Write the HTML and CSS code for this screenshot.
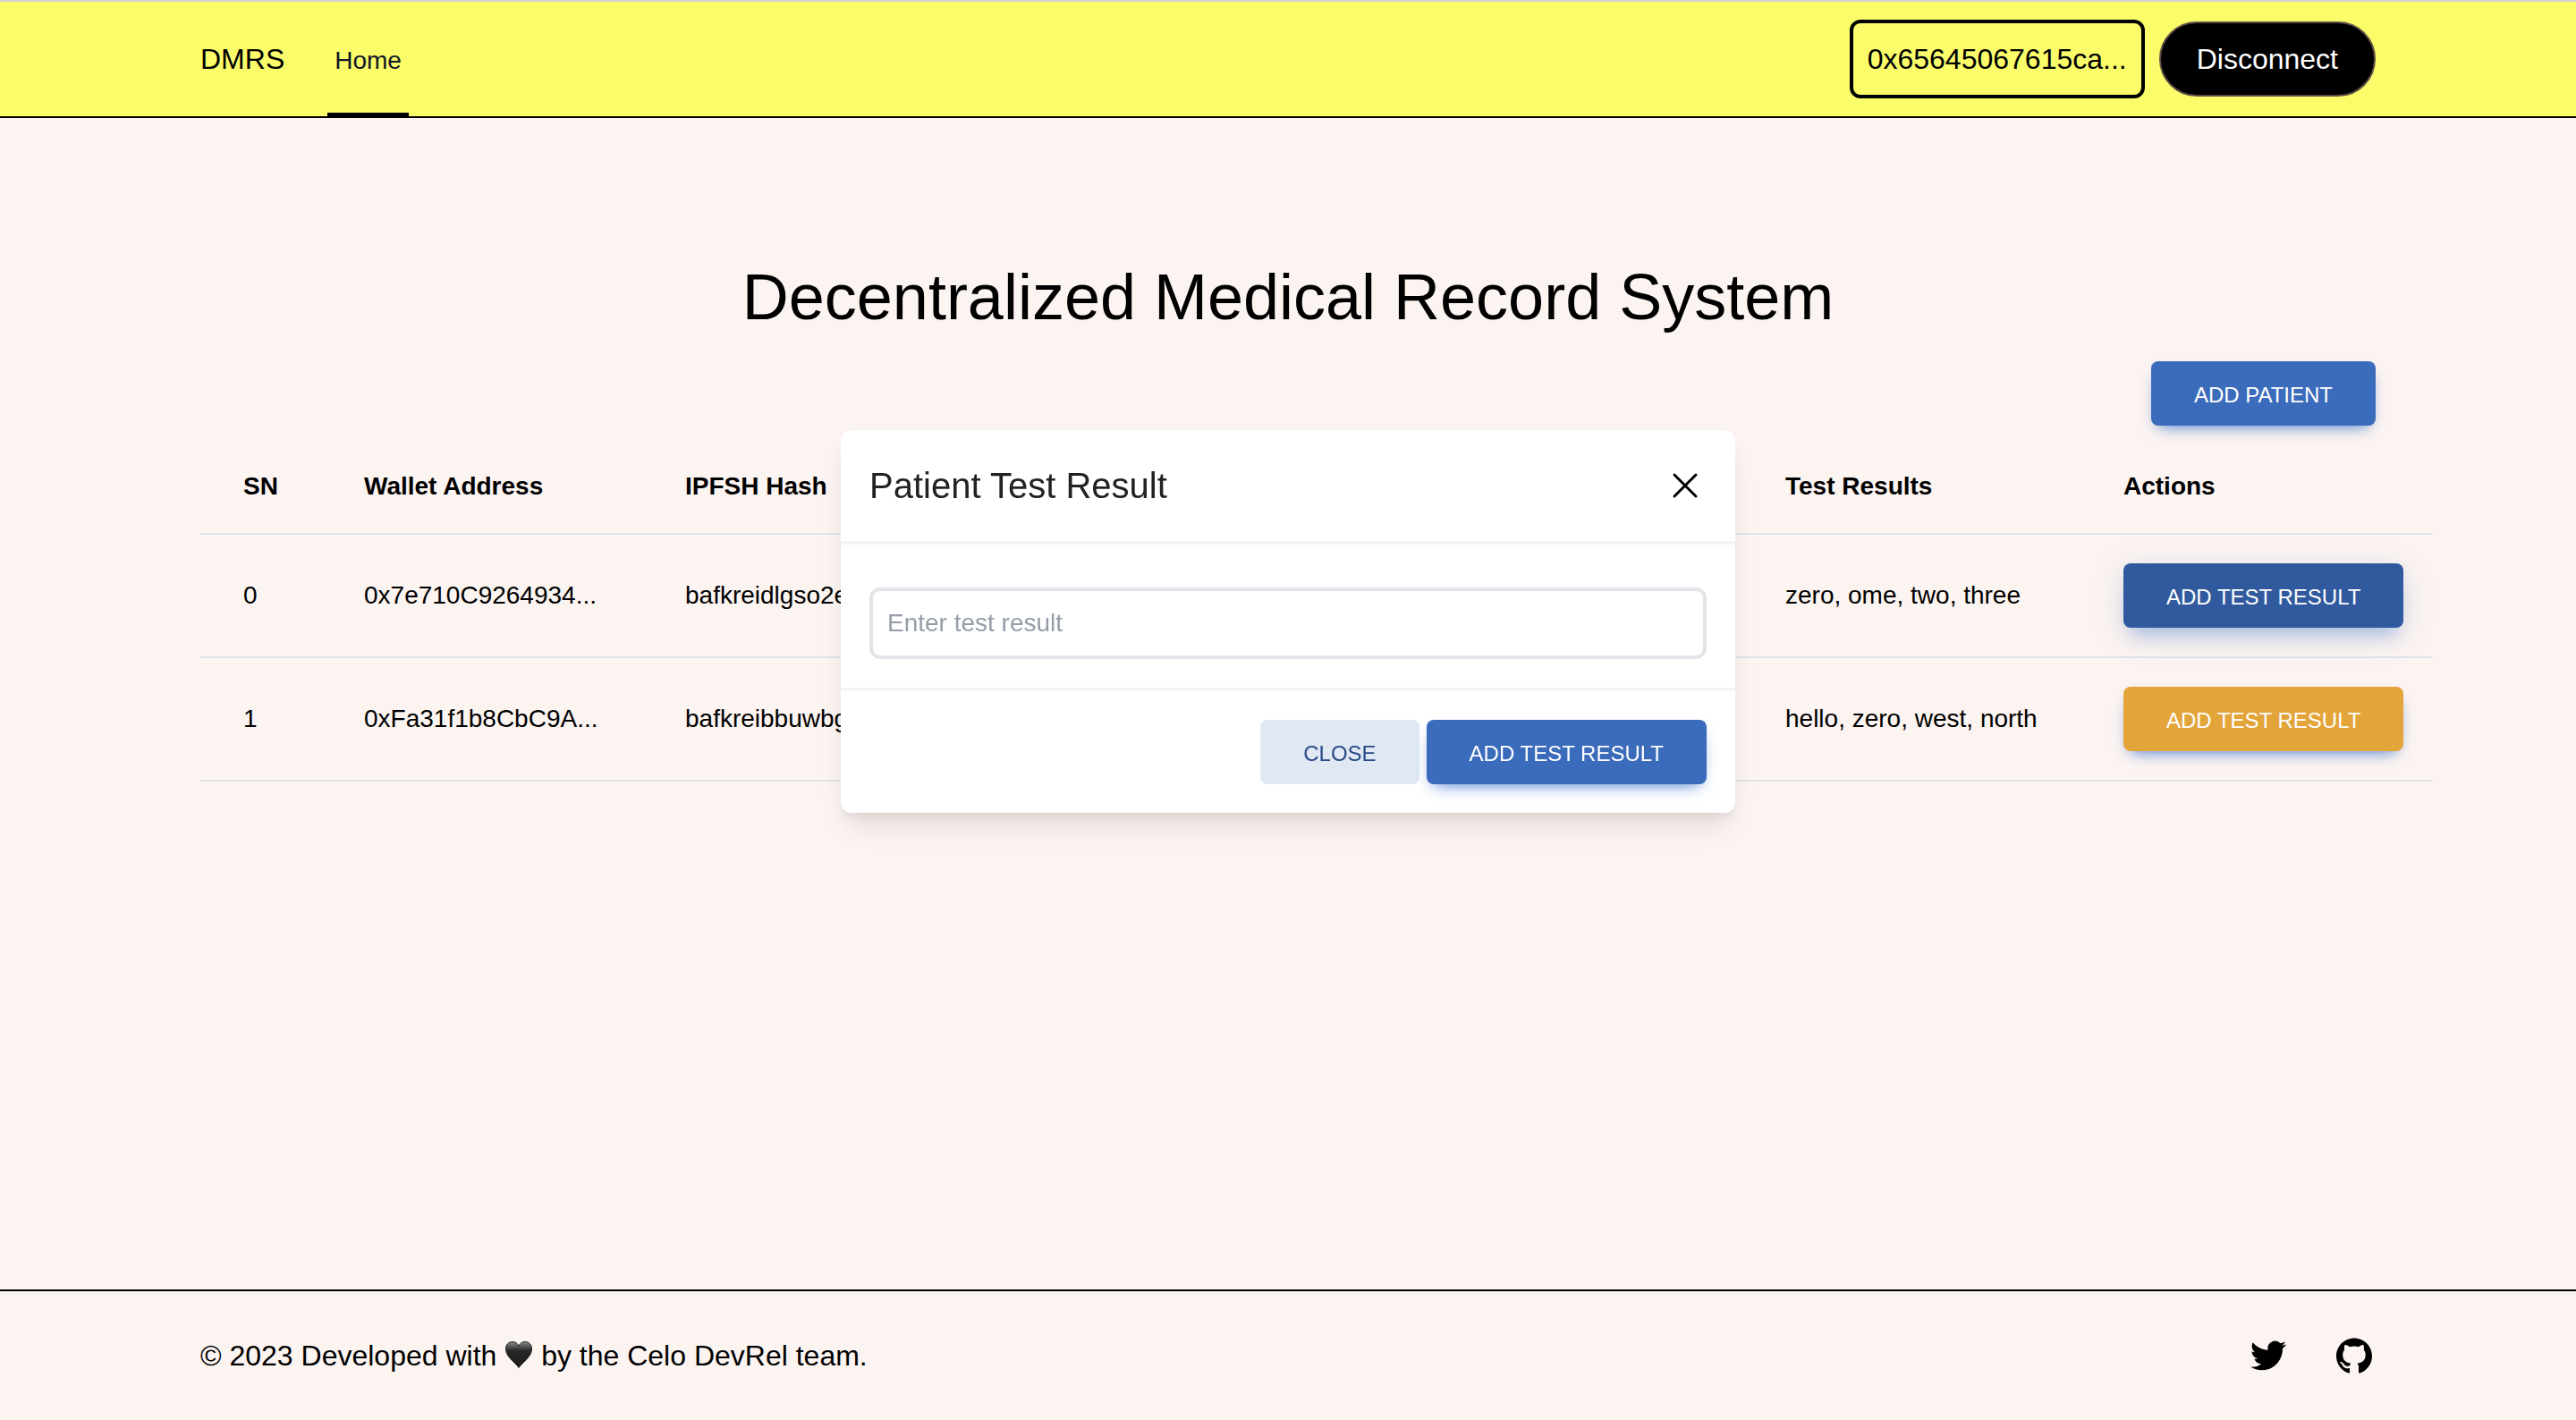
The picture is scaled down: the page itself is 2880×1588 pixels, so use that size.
FILE: index.html
```html
<!DOCTYPE html>
<html lang="en">
<head>
  <meta charset="utf-8">
  <meta name="viewport" content="width=device-width, initial-scale=1">
  <title>DMRS</title>
  <link rel="stylesheet" href="styles.css">
</head>
<body class="page">
  <header class="header">
    <div class="container header-inner">
      <span class="brand">DMRS</span>
      <nav class="nav">
        <a class="nav-link" href="#">Home</a>
      </nav>
      <div class="account">
        <span class="wallet">0x65645067615ca...</span>
        <button class="disconnect" type="button">Disconnect</button>
      </div>
    </div>
  </header>

  <main class="main container">
    <h1 class="title">Decentralized Medical Record System</h1>
    <div class="toolbar">
      <button class="btn btn-primary" type="button">Add Patient</button>
    </div>
    <table class="records">
      <colgroup>
        <col class="col-sn">
        <col class="col-wallet">
        <col>
        <col class="col-results">
        <col class="col-actions">
      </colgroup>
      <thead>
        <tr>
          <th scope="col">SN</th>
          <th scope="col">Wallet Address</th>
          <th scope="col">IPFSH Hash</th>
          <th scope="col">Test Results</th>
          <th scope="col">Actions</th>
        </tr>
      </thead>
      <tbody>
        <tr>
          <td>0</td>
          <td>0x7e710C9264934...</td>
          <td>bafkreidlgso2e...</td>
          <td>zero, ome, two, three</td>
          <td><button class="btn btn-active" type="button">Add Test Result</button></td>
        </tr>
        <tr>
          <td>1</td>
          <td>0xFa31f1b8CbC9A...</td>
          <td>bafkreibbuwbg...</td>
          <td>hello, zero, west, north</td>
          <td><button class="btn btn-warning" type="button">Add Test Result</button></td>
        </tr>
      </tbody>
    </table>
  </main>

  <footer class="footer">
    <div class="container footer-inner">
      <p class="credit">© 2023 Developed with
        <svg class="heart" viewBox="0 0 32 32" role="img" aria-label="love">
          <defs>
            <linearGradient id="heart-fill" x1="0" y1="0" x2="0" y2="1">
              <stop offset="0" stop-color="#8a8a8a"/>
              <stop offset="0.35" stop-color="#262626"/>
              <stop offset="1" stop-color="#1c1c1c"/>
            </linearGradient>
          </defs>
          <path fill="url(#heart-fill)" stroke="#1c1c1c" d="M16 30.500C12 24.500 1.500 18.500 1.500 9.500C1.500 4.800 4.700 1.500 8.800 1.500C12 1.500 14.700 3.300 16 6.200C17.300 3.300 20 1.500 23.200 1.500C27.300 1.500 30.500 4.800 30.500 9.500C30.500 18.500 20 24.500 16 30.500Z"/>
        </svg>
        by the Celo DevRel team.</p>
      <div class="social">
        <a class="social-link" href="#" aria-label="Twitter">
          <svg class="icon" viewBox="-2.4 -2.4 28.8 28.8" aria-hidden="true"><path d="M23.953 4.570a10 10 0 01-2.825.775 4.958 4.958 0 002.163-2.723c-.951.555-2.005.959-3.127 1.184a4.920 4.920 0 00-8.384 4.482C7.690 8.095 4.067 6.130 1.640 3.162a4.822 4.822 0 00-.666 2.475c0 1.710.870 3.213 2.188 4.096a4.904 4.904 0 01-2.228-.616v.060a4.923 4.923 0 003.946 4.827 4.996 4.996 0 01-2.212.085 4.936 4.936 0 004.604 3.417 9.867 9.867 0 01-6.102 2.105c-.390 0-.779-.023-1.170-.067a13.995 13.995 0 007.557 2.209c9.053 0 13.998-7.496 13.998-13.985 0-.210 0-.420-.015-.630A9.935 9.935 0 0024 4.590z"/></svg>
        </a>
        <a class="social-link" href="#" aria-label="GitHub">
          <svg class="icon" viewBox="-2.4 -2.4 28.8 28.8" aria-hidden="true"><path d="M12 .3C5.370.3 0 5.670 0 12.300c0 5.300 3.440 9.800 8.200 11.390.270.050.520.030.800-.020v-3.200c-3.300.580-4.500-1.100-5.050-2.350-.300-.650-.750-1.050-1.350-1.350-.300-.180-.200-.550.250-.570 1.100-.050 1.850.850 2.250 1.450.900 1.500 2.350 1.700 3.900 1.200.100-.750.400-1.300.800-1.650-3.200-.400-5.470-1.650-5.470-5.900 0-1.310.470-2.380 1.240-3.220-.140-.300-.540-1.520.100-3.180 0 0 1.010-.320 3.300 1.230a11.500 11.500 0 016 0c2.280-1.550 3.290-1.230 3.290-1.230.640 1.660.240 2.880.120 3.180.760.840 1.230 1.910 1.230 3.220 0 4.300-2.300 5.500-5.500 5.900.500.450.890 1.250.890 2.350v4.120c.280.050.530.070.800.020C20.570 22.090 24 17.590 24 12.300 24 5.670 18.630.3 12 .3z"/></svg>
        </a>
      </div>
    </div>
  </footer>

  <div class="overlay">
    <form class="modal" role="dialog" aria-labelledby="modal-title">
      <div class="modal-header">
        <h2 class="modal-title" id="modal-title">Patient Test Result</h2>
        <button class="modal-close" type="button" aria-label="Close">
          <svg class="icon" viewBox="0 0 24 24" aria-hidden="true"><path fill="none" stroke="currentColor" stroke-width="1.5" stroke-linecap="round" d="M6 18L18 6M6 6l12 12"/></svg>
        </button>
      </div>
      <div class="modal-body">
        <input class="field" type="text" aria-label="Test result" placeholder="Enter test result">
      </div>
      <div class="modal-footer">
        <button class="btn btn-light" type="button">Close</button>
        <button class="btn btn-primary" type="button">Add Test Result</button>
      </div>
    </form>
  </div>
</body>
</html>
```
FILE: styles.css
```css
*,
*::before,
*::after {
  box-sizing: border-box;
}

.page {
  margin: 0;
  min-height: 100vh;
  display: flex;
  flex-direction: column;
  background: #fcf4f1;
  color: #000;
  font-family: "Liberation Sans", Arial, Helvetica, sans-serif;
  font-size: 32px;
  line-height: 48px;
}

button,
input {
  margin: 0;
  font: inherit;
}

.container {
  width: 100%;
  max-width: 2560px;
  margin: 0 auto;
  padding: 0 64px;
}

/* Header */
.header {
  background: #fafc6a;
  border-top: 2px solid #d3d3d3;
  border-bottom: 2px solid #000;
}

.header-inner {
  display: flex;
  align-items: center;
  height: 128px;
}

.nav {
  display: flex;
  align-self: stretch;
  margin-left: 48px;
}

.nav-link {
  display: flex;
  align-items: center;
  padding: 8px 8px 0;
  border-bottom: 4px solid #000;
  color: #111827;
  font-size: 28px;
  line-height: 40px;
  text-decoration: none;
}

.account {
  display: flex;
  align-items: center;
  gap: 16px;
  margin-left: auto;
}

.wallet {
  padding: 16px;
  border: 4px solid #000;
  border-radius: 12px;
}

.disconnect {
  padding: 16px 40px;
  border: 2px solid #5f4e45;
  border-radius: 42px;
  background: #000;
  color: #fff;
}

/* Buttons */
.btn {
  padding: 22px 48px 18px;
  border: 0;
  border-radius: 8px;
  font-size: 24px;
  line-height: 32px;
  text-transform: uppercase;
  white-space: nowrap;
  color: #fff;
  cursor: pointer;
  box-shadow: 0 8px 18px -8px #3b71ca;
}

.btn-primary {
  background: #3b6cbb;
}

.btn-active {
  background: #315a9e;
  box-shadow: 0 16px 18px -8px rgba(59, 113, 202, 0.3), 0 8px 36px 0 rgba(59, 113, 202, 0.2);
}

.btn-warning {
  background: #e3a53a;
}

.btn-light {
  background: #dfe8f3;
  color: #284a86;
  box-shadow: none;
}

/* Records */
.main {
  flex: 1;
  padding-top: 160px;
}

.title {
  margin: 0;
  font-size: 72px;
  line-height: 80px;
  font-weight: 400;
  text-align: center;
}

.toolbar {
  display: flex;
  justify-content: flex-end;
  margin: 32px 0 16px;
}

.records {
  width: calc(100% + 64px);
  table-layout: fixed;
  border-collapse: separate;
  border-spacing: 0;
  font-size: 28px;
  line-height: 40px;
  text-align: left;
}

.records th,
.records td {
  padding: 32px 0 32px 48px;
  border-bottom: 2px solid #e0e4ea;
}

.records .btn {
  display: block;
}

.col-sn {
  width: 135px;
}

.col-wallet {
  width: 359px;
}

.col-results {
  width: 378px;
}

.col-actions {
  width: 394px;
}

/* Footer */
.footer {
  border-top: 2px solid #000;
}

.footer-inner {
  display: flex;
  align-items: center;
  justify-content: space-between;
  padding-top: 48px;
  padding-bottom: 48px;
}

.credit {
  margin: 0;
}

.heart {
  width: 32px;
  height: 32px;
  vertical-align: -4px;
}

.social {
  display: flex;
  gap: 48px;
}

.social-link {
  color: #000;
}

.icon {
  display: block;
  width: 48px;
  height: 48px;
  fill: currentColor;
}

/* Modal */
.overlay {
  position: fixed;
  inset: 0;
  display: flex;
  align-items: flex-start;
  justify-content: center;
  padding-top: 481px;
}

.modal {
  width: 1000px;
  max-width: 100%;
  border-radius: 12px;
  background: #fff;
  box-shadow: 0 20px 30px -6px rgba(0, 0, 0, 0.1), 0 8px 12px -4px rgba(0, 0, 0, 0.07);
}

.modal-header {
  display: flex;
  align-items: center;
  justify-content: space-between;
  padding: 32px;
  border-bottom: 4px solid #f4f4f4;
}

.modal-title {
  margin: 0;
  color: #222;
  font-size: 40px;
  line-height: 60px;
  font-weight: 400;
}

.modal-close {
  padding: 0;
  border: 0;
  background: none;
  color: #000;
}

.modal-body {
  padding: 48px 32px 32px;
}

.field {
  display: block;
  width: 100%;
  height: 80px;
  padding: 0 16px;
  border: 4px solid #e1e4e9;
  border-radius: 12px;
  background: #fff;
  color: #222;
  font-size: 28px;
}

.field::placeholder {
  color: #959da8;
  opacity: 1;
}

.modal-footer {
  display: flex;
  justify-content: flex-end;
  gap: 8px;
  padding: 32px;
  border-top: 4px solid #f4f4f4;
}
```
